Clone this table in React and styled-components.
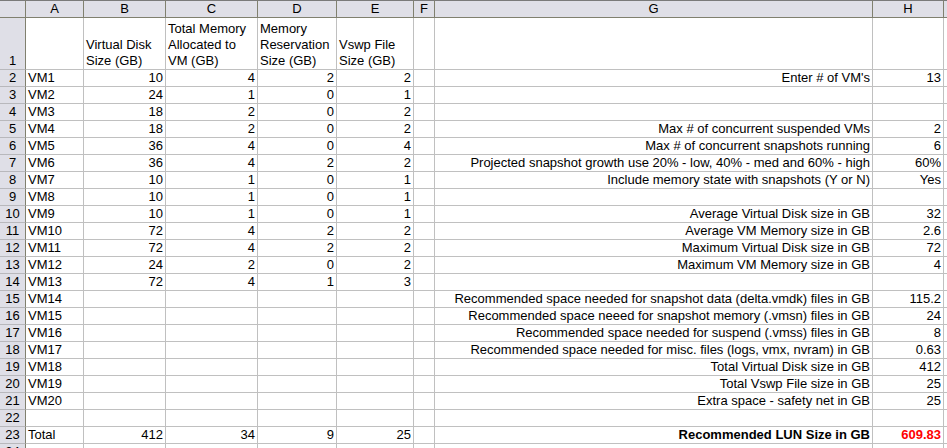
import styled, { createGlobalStyle } from 'styled-components';

const GlobalStyle = createGlobalStyle`
  html, body {
    margin: 0;
    padding: 0;
    background: #ffffff;
    overflow: hidden;
  }
  body {
    font-family: "Liberation Sans", Arial, sans-serif;
    font-size: 13px;
    color: #000000;
  }
`;

const headerBg = '#dfdfe7';
const headerLine = '#80806f';
const gridLine = '#c0c0c0';

const Sheet = styled.div`
  display: grid;
  grid-template-columns: 26px 58px 82px 92px 79px 77px 21px 438px 71px 1fr;
  grid-template-rows: 18px 52px repeat(23, 17px);
  width: 947px;
  height: 448px;
  overflow: hidden;
`;

const ColHeader = styled.div`
  background: ${headerBg};
  border-top: 1px solid #7a7a7a;
  border-bottom: 1px solid ${headerLine};
  border-right: ${({ $last }) => ($last ? 'none' : `1px solid ${headerLine}`)};
  box-sizing: border-box;
  display: flex;
  align-items: center;
  justify-content: center;
  font-size: 13px;
  line-height: 16px;
`;

const RowHeader = styled.div`
  background: ${headerBg};
  border-right: 1px solid ${headerLine};
  border-bottom: 1px solid #b8b8bc;
  box-sizing: border-box;
  display: flex;
  align-items: flex-end;
  justify-content: center;
  line-height: 16px;
`;

const Cell = styled.div`
  border-right: ${({ $last }) => ($last ? 'none' : `1px solid ${gridLine}`)};
  border-bottom: 1px solid ${gridLine};
  box-sizing: border-box;
  padding: 0 2px 0 2px;
  display: flex;
  flex-direction: column;
  justify-content: flex-end;
  align-items: ${({ $right }) => ($right ? 'flex-end' : 'flex-start')};
  line-height: 16px;
  white-space: nowrap;
  font-weight: ${({ $bold }) => ($bold ? 700 : 400)};
  color: ${({ $red }) => ($red ? '#ff0000' : '#000000')};
`;

const columns = ['A', 'B', 'C', 'D', 'E', 'F', 'G', 'H', ''];

const titles = [
  [],
  ['Virtual Disk', 'Size (GB)'],
  ['Total Memory', 'Allocated to', 'VM (GB)'],
  ['Memory', 'Reservation', 'Size (GB)'],
  ['Vswp File', 'Size (GB)'],
];

const vms = [
  [10, 4, 2, 2],
  [24, 1, 0, 1],
  [18, 2, 0, 2],
  [18, 2, 0, 2],
  [36, 4, 0, 4],
  [36, 4, 2, 2],
  [10, 1, 0, 1],
  [10, 1, 0, 1],
  [10, 1, 0, 1],
  [72, 4, 2, 2],
  [72, 4, 2, 2],
  [24, 2, 0, 2],
  [72, 4, 1, 3],
];

// column G / H text, keyed by spreadsheet row number
const summary = {
  2: ["Enter # of VM's", '13'],
  5: ['Max # of concurrent suspended VMs', '2'],
  6: ['Max # of concurrent snapshots running', '6'],
  7: ['Projected snapshot growth use 20% - low, 40% - med and 60% - high', '60%'],
  8: ['Include memory state with snapshots (Y or N)', 'Yes'],
  10: ['Average Virtual Disk size in GB', '32'],
  11: ['Average VM Memory size in GB', '2.6'],
  12: ['Maximum Virtual Disk size in GB', '72'],
  13: ['Maximum VM Memory size in GB', '4'],
  15: ['Recommended space needed for snapshot data (delta.vmdk) files in GB', '115.2'],
  16: ['Recommended space neeed for snapshot memory (.vmsn) files in GB', '24'],
  17: ['Recommended space needed for suspend (.vmss) files in GB', '8'],
  18: ['Recommended space needed for misc. files (logs, vmx, nvram) in GB', '0.63'],
  19: ['Total Virtual Disk size in GB', '412'],
  20: ['Total Vswp File size in GB', '25'],
  21: ['Extra space - safety net in GB', '25'],
  23: ['Recommended LUN Size in GB', '609.83'],
};

const buildRow = (n) => {
  let name = '';
  let nums = ['', '', '', ''];
  if (n >= 2 && n <= 21) name = `VM${n - 1}`;
  if (n >= 2 && n <= 14) nums = vms[n - 2].map(String);
  if (n === 23) {
    name = 'Total';
    nums = ['412', '34', '9', '25'];
  }
  const [label, value] = summary[n] || ['', ''];
  return { name, nums, label, value, total: n === 23 };
};

const rows = Array.from({ length: 23 }, (_, i) => buildRow(i + 2));

const App = () => (
  <>
    <GlobalStyle />
    <Sheet>
      <ColHeader />
      {columns.map((c, i) => (
        <ColHeader key={i} $last={i === columns.length - 1}>{c}</ColHeader>
      ))}

      <RowHeader>1</RowHeader>
      {titles.map((lines, i) => (
        <Cell key={i}>
          {lines.map((l) => (
            <span key={l}>{l}</span>
          ))}
        </Cell>
      ))}
      <Cell />
      <Cell />
      <Cell />
      <Cell $last />

      {rows.map((r, i) => (
        <Row key={i} n={i + 2} row={r} />
      ))}
    </Sheet>
  </>
);

const Row = ({ n, row }) => (
  <>
    <RowHeader>{n}</RowHeader>
    <Cell>{row.name}</Cell>
    {row.nums.map((v, j) => (
      <Cell key={j} $right>{v}</Cell>
    ))}
    <Cell />
    <Cell $right $bold={row.total}>{row.label}</Cell>
    <Cell $right $bold={row.total} $red={row.total}>{row.value}</Cell>
    <Cell $last />
  </>
);

export default App;
